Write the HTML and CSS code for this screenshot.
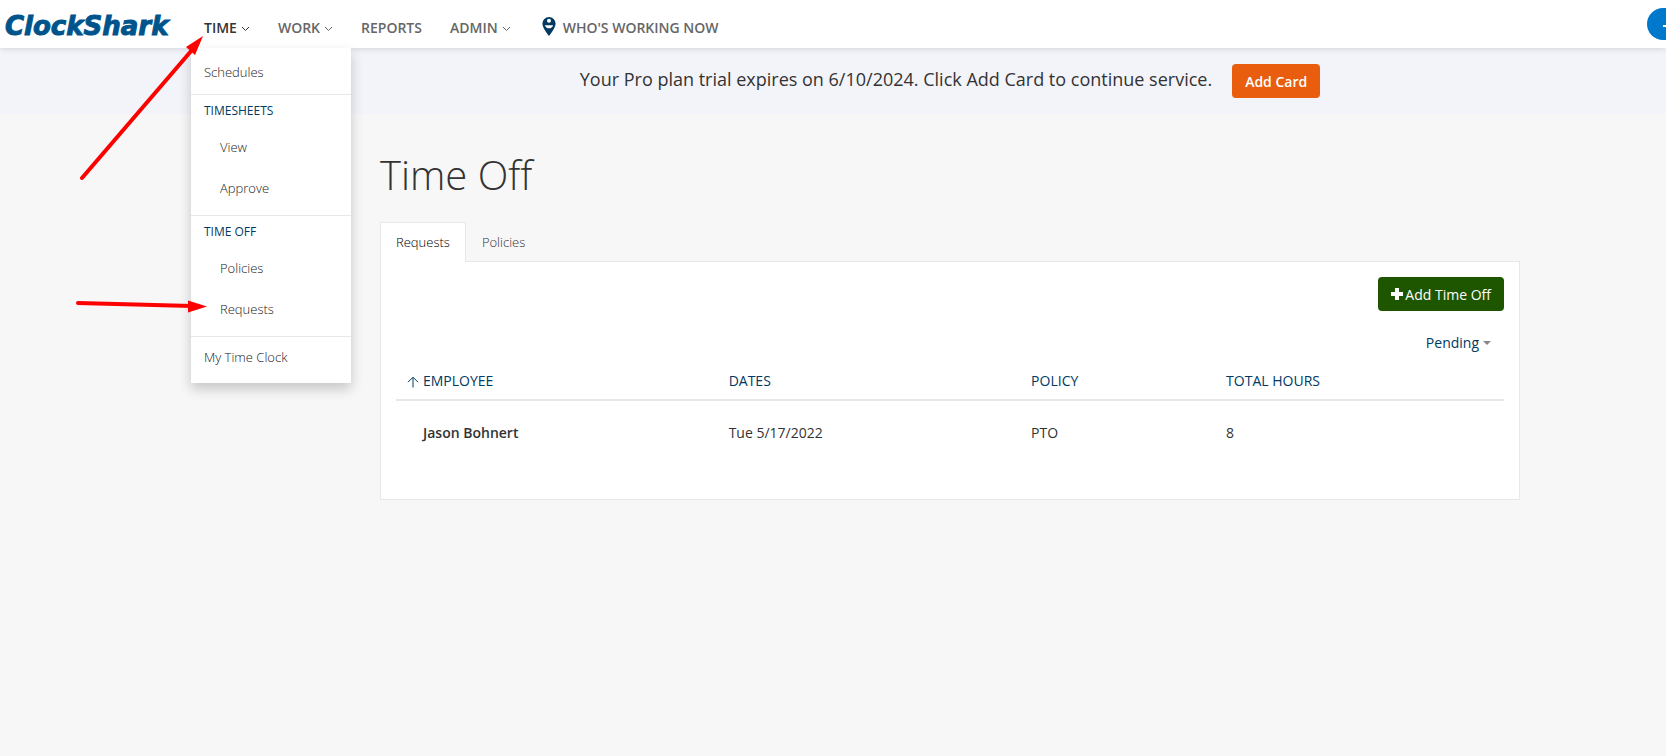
FILE: index.html
```
<!DOCTYPE html>
<html lang="en">
<head>
  <meta charset="UTF-8">
  <meta name="viewport" content="width=device-width, initial-scale=1.0">
  <title>Time Off - ClockShark</title>
  <link rel="stylesheet" href="styles.css">
</head>
<body>
  <header>
    <a class="logo" href="#">ClockShark</a>
    <nav>
      <div class="nav-item open">
        <button class="nav-link" aria-expanded="true">TIME
          <svg class="chevron" viewBox="0 0 9 6"><path d="M1 1l3.5 3.5L8 1"/></svg>
        </button>
        <div class="menu">
          <div class="menu-group">
            <a href="#">Schedules</a>
          </div>
          <div class="menu-group nested">
            <h3>TIMESHEETS</h3>
            <a href="#">View</a>
            <a href="#">Approve</a>
          </div>
          <div class="menu-group nested">
            <h3>TIME OFF</h3>
            <a href="#">Policies</a>
            <a href="#">Requests</a>
          </div>
          <div class="menu-group last">
            <a href="#">My Time Clock</a>
          </div>
        </div>
      </div>
      <button class="nav-link">WORK
        <svg class="chevron" viewBox="0 0 9 6"><path d="M1 1l3.5 3.5L8 1"/></svg>
      </button>
      <a class="nav-link" href="#">REPORTS</a>
      <button class="nav-link">ADMIN
        <svg class="chevron" viewBox="0 0 9 6"><path d="M1 1l3.5 3.5L8 1"/></svg>
      </button>
      <a class="nav-link who" href="#">
        <svg class="pin" viewBox="0 0 14 19">
          <path fill="#003a63" d="M7 0a6.6 6.6 0 0 0-6.6 6.6C.4 11.300 7 19 7 19s6.600-7.700 6.600-12.400A6.600 6.600 0 0 0 7 0z"/>
          <circle cx="7" cy="3.800" r="2" fill="#fff"/>
          <path fill="#fff" d="M2.800 8.200h8.400C10.500 10.200 9 11.300 7 11.300S3.500 10.200 2.800 8.200z"/>
        </svg>
        WHO'S WORKING NOW
      </a>
    </nav>
    <button class="quick-add" aria-label="Add">
      <svg viewBox="0 0 12 12"><path d="M0 6h12M6 0v12"/></svg>
    </button>
  </header>

  <div class="banner">
    <span>Your Pro plan trial expires on 6/10/2024. Click Add Card to continue service.</span>
    <button class="btn btn-orange">Add Card</button>
  </div>

  <main>
    <h1>Time Off</h1>
    <div class="tabs">
      <a class="tab active" href="#">Requests</a>
      <a class="tab" href="#">Policies</a>
    </div>
    <section class="panel">
      <div class="row">
        <button class="btn btn-green">
          <svg class="plus" viewBox="0 0 12 12"><path d="M0 6h12M6 0v12"/></svg>
          Add Time Off
        </button>
      </div>
      <div class="row filter">
        <select id="status" aria-label="Request status">
          <option>Pending</option>
          <option>Approved</option>
          <option>Denied</option>
        </select>
        <svg class="caret" viewBox="0 0 8 4"><path d="M0 0h8L4 4z"/></svg>
      </div>
      <table>
        <thead>
          <tr>
            <th class="employee"><svg class="sort" viewBox="0 0 12 12"><path d="M6 11.500V1.500M1 6.200l5-5 5 5"/></svg>EMPLOYEE</th>
            <th class="dates">DATES</th>
            <th class="policy">POLICY</th>
            <th>TOTAL HOURS</th>
          </tr>
        </thead>
        <tbody>
          <tr>
            <td class="name">Jason Bohnert</td>
            <td>Tue 5/17/2022</td>
            <td>PTO</td>
            <td>8</td>
          </tr>
        </tbody>
      </table>
    </section>
  </main>

  <!-- walkthrough arrows -->
  <svg class="arrows" width="210" height="320" viewBox="0 0 210 320">
    <path class="shaft" d="M82 178L192 50M78 303l114 3"/>
    <path class="head" d="M203 36l-17 11 9 8zM207 306.500l-19-6v12z"/>
  </svg>
</body>
</html>
```
FILE: styles.css
```
:root {
  --bg: #f7f7f7;
  --fg: #333;
  --muted: #666;
  --navy: #003a63;
  --logo: #00548c;
  --line: #e8e8e8;
  --banner-bg: #f3f4f9;
  --orange: #e85d0e;
  --green: #1e5600;
  --blue: #0078cc;
}
* { box-sizing: border-box; }
body { font-family: "Open Sans", "Noto Sans", sans-serif; font-size: 14px; margin: 0; background: var(--bg); color: var(--fg); overflow-x: hidden; }
a { color: inherit; text-decoration: none; }
button, select { font: inherit; border: none; padding: 0; cursor: pointer; }
header { position: relative; z-index: 2; display: flex; align-items: center; height: 48px; padding-left: 5px; background: #fff; box-shadow: 0 1px 6px #0002; }
.logo { width: 186px; padding-top: 3px; font-family: "DejaVu Sans", sans-serif; font-size: 26px; font-weight: bold; font-style: italic; color: var(--logo); -webkit-text-stroke: 1px var(--logo); }
nav { display: flex; flex: 1; }
.nav-item { position: relative; }
.nav-link { display: flex; align-items: center; gap: 4px; height: 48px; padding: 6px 15px 0 13px; background: none; color: var(--muted); font-weight: 600; white-space: nowrap; }
.open .nav-link { color: var(--fg); }
.chevron { width: 9px; height: 6px; margin-top: 4px; fill: none; stroke: currentColor; }
.who { gap: 7px; margin-left: 3px; }
.pin { width: 14px; height: 19px; margin-top: -2px; }
.quick-add { flex-shrink: 0; width: 44px; height: 32px; margin-right: -25px; border-radius: 16px; background: var(--blue); }
.quick-add svg { width: 12px; height: 12px; stroke: #fff; stroke-width: 2; vertical-align: middle; }
.menu { position: absolute; top: 48px; left: 0; width: 160px; background: #fff; color: #222; font-size: 13px; font-weight: 300; box-shadow: 0 6px 12px #0003; }
.menu-group { padding: 4px 0 1px; border-bottom: 1px solid var(--line); }
.menu-group a { display: block; padding-left: 13px; line-height: 41px; }
.menu-group h3 { margin: 0; padding-left: 13px; font-size: 12px; font-weight: 500; line-height: 32px; color: var(--navy); }
.nested { padding: 0 0 6px; }
.nested a { padding-left: 29px; }
.last { padding: 0 0 5px; border: none; }
.banner { display: flex; align-items: center; justify-content: center; gap: 20px; height: 66px; padding-left: 234px; background: var(--banner-bg); font-size: 18px; }
.banner span { padding-bottom: 4px; }
.btn { height: 34px; padding: 0 13px; border-radius: 4px; color: #fff; font-size: 14px; font-weight: 600; }
.btn-orange { background: var(--orange); }
.btn-green { display: flex; align-items: center; gap: 2px; background: var(--green); font-weight: 500; }
.plus { width: 12px; height: 12px; stroke: #fff; stroke-width: 4; }
main { margin: 0 146px 0 380px; padding-top: 34px; }
h1 { margin: 0; font-size: 40px; font-weight: 300; line-height: 54px; }
.tabs { display: flex; margin-top: 20px; font-size: 13px; }
.tab { padding: 0 16px; line-height: 38px; font-weight: 300; border-top: 1px solid transparent; }
.tab.active { position: relative; margin-bottom: -1px; padding: 0 15px; background: #fff; color: #000; border: 1px solid var(--line); border-bottom: none; }
.panel { padding: 15px 15px 36px; background: #fff; border: 1px solid var(--line); }
.row { display: flex; justify-content: flex-end; align-items: center; }
.filter { gap: 4px; margin-top: 20px; padding-right: 13px; color: var(--navy); }
.filter select { appearance: none; background: none; color: inherit; font-weight: 500; line-height: 24px; text-align-last: right; }
.caret { width: 8px; height: 4px; fill: #888; }
table { width: 100%; border-spacing: 0; table-layout: fixed; margin-top: 6px; }
th { height: 40px; padding: 0 8px; border-bottom: 2px solid var(--line); color: var(--navy); font-weight: 500; text-align: left; }
td { height: 62px; padding: 0 8px; }
.employee { width: 29.300%; padding-left: 11px; }
.dates { width: 27.300%; }
.policy { width: 17.600%; }
.sort { width: 12px; height: 12px; margin-right: 4px; vertical-align: -2px; fill: none; stroke: var(--navy); }
.name { padding-left: 27px; font-weight: 600; }
.arrows { position: absolute; top: 0; left: 0; z-index: 3; pointer-events: none; }
.shaft { fill: none; stroke: #f00; stroke-width: 4; stroke-linecap: round; }
.head { fill: #f00; }
```
